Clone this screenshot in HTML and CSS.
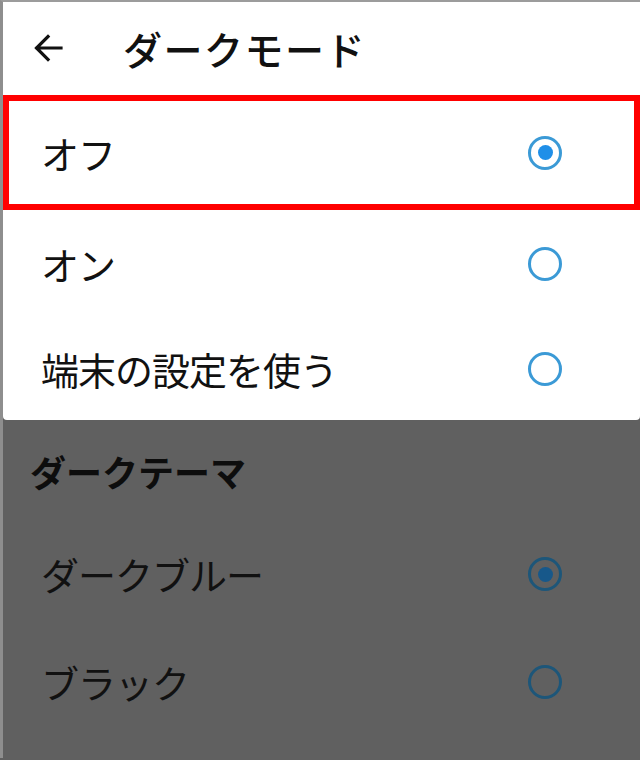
FILE: index.html
```html
<!DOCTYPE html>
<html lang="ja">
<head>
<meta charset="utf-8">
<link rel="stylesheet" href="styles.css">
</head>
<body>
<div class="frame">
  <div class="sheet">
    <div class="header">
      <svg class="back" width="30" height="30" viewBox="0 0 30 30" aria-hidden="true">
        <path d="M28 15H4M15 3.5L3.5 15L15 26.5" fill="none" stroke="#111" stroke-width="3.2" stroke-linecap="square"/>
      </svg>
      <h1 class="title">ダークモード</h1>
    </div>
    <div class="row row-selected">
      <span class="label">オフ</span>
      <span class="radio checked"></span>
    </div>
    <div class="row">
      <span class="label">オン</span>
      <span class="radio"></span>
    </div>
    <div class="row row-last">
      <span class="label">端末の設定を使う</span>
      <span class="radio"></span>
    </div>
  </div>
  <div class="dim">
    <h2 class="section">ダークテーマ</h2>
    <div class="row dim-row">
      <span class="label">ダークブルー</span>
      <span class="radio dim-radio checked"></span>
    </div>
    <div class="row dim-row">
      <span class="label">ブラック</span>
      <span class="radio dim-radio"></span>
    </div>
  </div>
</div>
</body>
</html>
```

FILE: styles.css
```css
html, body {
  margin: 0;
  padding: 0;
}
body {
  width: 640px;
  height: 760px;
  overflow: hidden;
  background: #606060;
  font-family: "Noto Sans CJK JP", "Noto Sans", sans-serif;
  color: #111;
}
.frame {
  border-top: 2px solid #9c9c9c;
  border-left: 3px solid #8e8e8e;
  height: 758px;
  box-sizing: border-box;
}
.sheet {
  background: #fff;
  border-radius: 0 0 4px 4px;
}
.header {
  height: 93px;
  display: flex;
  align-items: center;
  padding-left: 30px;
}
.back {
  display: block;
  margin-top: -2px;
}
.title {
  margin: 0 0 0 60px;
  font-size: 39px;
  font-weight: 500;
  line-height: 1;
  letter-spacing: 1.5px;
}
.row {
  display: flex;
  align-items: center;
  justify-content: space-between;
  height: 107px;
  padding: 0 78px 0 38px;
}
.row-selected {
  height: 115px;
  border: 6px solid #ff0000;
  box-sizing: border-box;
  padding: 0 72px 0 32px;
}
.row-last {
  height: 103px;
}
.label {
  font-size: 38px;
  line-height: 1;
  letter-spacing: -1px;
}
.radio {
  width: 34px;
  height: 34px;
  box-sizing: border-box;
  border: 3px solid #3b9ad6;
  border-radius: 50%;
  display: flex;
  align-items: center;
  justify-content: center;
}
.radio.checked::after {
  content: "";
  width: 15px;
  height: 15px;
  border-radius: 50%;
  background: #1f8fe8;
}
.dim {
  padding-top: 33px;
}
.section {
  margin: 0 0 31px 27px;
  font-size: 36px;
  font-weight: 700;
  line-height: 1;
  color: #0d0d0d;
}
.dim-row {
  height: 108px;
}
.dim-row .label {
  color: #111;
}
.dim-radio {
  border-color: #1d5679;
}
.dim-radio.checked::after {
  background: #17588a;
}
```
